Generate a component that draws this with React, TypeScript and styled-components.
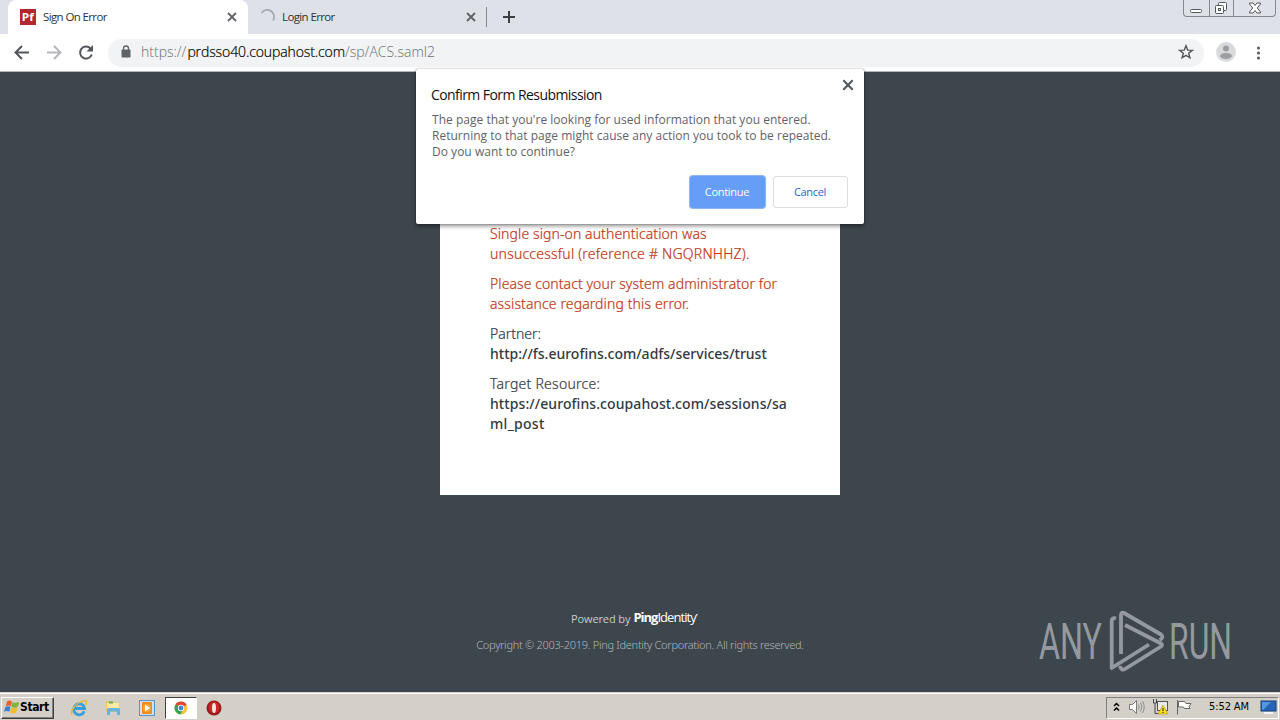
import React from 'react';
import styled, { createGlobalStyle } from 'styled-components';

const GlobalStyle = createGlobalStyle`
  * {
    box-sizing: border-box;
  }

  body {
    margin: 0;
    overflow: hidden;
    font-family: 'Open Sans', 'Noto Sans', sans-serif;
  }

  svg {
    display: block;
    flex: none;
  }
`;

const Screen = styled.div`
  position: relative;
  display: flex;
  flex-direction: column;
  width: 1280px;
  height: 720px;
  background-color: #3e464d;
`;

const TabStrip = styled.div`
  display: flex;
  height: 34px;
  padding-left: 8px;
  background-color: #dee1e8;
`;

const Tab = styled.div<{ $active?: boolean }>`
  display: flex;
  align-items: center;
  width: ${(p) => (p.$active ? 240 : 238)}px;
  height: 34px;
  padding: 0 ${(p) => (p.$active ? 10 : 9)}px 0 12px;
  border-radius: 8px 8px 0 0;
  background-color: ${(p) => (p.$active ? '#fff' : 'transparent')};
`;

const TabTitle = styled.span`
  flex: 1;
  margin-left: 7px;
  color: #303336;
  font-size: 11.5px;
  line-height: 16px;
  letter-spacing: -0.62px;
  white-space: nowrap;
`;

const Divider = styled.div`
  width: 1px;
  height: 20px;
  margin: 7px 15px 0 0;
  background-color: #85888d;
`;

const NewTab = styled.div`
  display: flex;
  align-items: center;
  flex: 1;
`;

const WindowButtons = styled.div`
  display: flex;
  width: 93px;
  height: 17px;
  margin-right: 4px;
  border: 1px solid #85888f;
  border-top: none;
  border-radius: 0 0 4px 4px;
`;

const WindowButton = styled.div<{ $width: number }>`
  display: flex;
  align-items: center;
  justify-content: center;
  width: ${(p) => p.$width}px;

  & + & {
    border-left: 1px solid #85888f;
  }
`;

const Toolbar = styled.div`
  display: flex;
  align-items: center;
  height: 38px;
  padding: 0 13px;
  border-bottom: 1px solid #b4b7ba;
  background-color: #fff;
`;

const NavButton = styled.div`
  display: flex;
  width: 32px;
`;

const AddressBar = styled.div`
  display: flex;
  align-items: center;
  width: 1096px;
  height: 28px;
  margin: 0 12px 0 -1px;
  padding: 0 10px 0 13px;
  border-radius: 14px;
  background-color: #f1f3f4;
`;

const Url = styled.span`
  flex: 1;
  margin: -2px 0 0 10px;
  color: #6b6f73;
  font-size: 14px;
  font-weight: 300;
  line-height: 20px;

  b {
    margin-left: 1px;
    color: #000;
    font-weight: 300;
    letter-spacing: -0.1px;
    -webkit-text-stroke: 0.2px #000;
  }
`;

const MenuDots = styled.div`
  margin-left: 13px;
`;

const Page = styled.div`
  display: flex;
  flex-direction: column;
  align-items: center;
  height: 620px;
`;

const Card = styled.div`
  width: 400px;
  height: 423px;
  padding: 152px 50px 0;
  background-color: #fff;
`;

const Message = styled.p<{ $error?: boolean }>`
  margin: 0 0 10px;
  color: ${(p) => (p.$error ? '#c1350f' : '#32393f')};
  font-family: 'Noto Sans', sans-serif;
  font-size: 14px;
  line-height: 20px;
`;

const Line = styled.span<{ $spacing?: number; $strong?: boolean }>`
  display: block;
  font-weight: ${(p) => (p.$strong ? 500 : 300)};
  letter-spacing: ${(p) => p.$spacing ?? 0}px;
  white-space: nowrap;
  -webkit-text-stroke: ${(p) => (p.$strong ? 0 : 0.2)}px;
`;

const PoweredBy = styled.div`
  display: flex;
  align-items: center;
  height: 20px;
  margin: 113px 0 0 -12px;
  color: #c6cace;
  font-size: 11px;
  letter-spacing: -0.1px;
`;

const PingLogo = styled.span`
  margin: -2px 0 0 3px;
  color: #fff;
  font-size: 13px;
  letter-spacing: -0.95px;

  b {
    font-weight: 700;
    letter-spacing: -1px;
  }

  sup {
    font-size: 6px;
    line-height: 0;
  }
`;

const Copyright = styled.div`
  margin-top: 9px;
  color: #b0b5ba;
  font-family: 'Noto Sans', sans-serif;
  font-size: 11px;
  font-weight: 300;
  line-height: 16px;
  letter-spacing: -0.28px;
`;

const Watermark = styled.div`
  position: absolute;
  left: 1036px;
  top: 606px;
`;

const Dialog = styled.div`
  position: absolute;
  left: 416px;
  top: 69px;
  width: 448px;
  height: 155px;
  padding: 16px;
  border-radius: 2px;
  background-color: #fff;
  box-shadow: 0 0 1px rgba(0, 0, 0, 0.7), 0 2px 4px rgba(0, 0, 0, 0.45);
`;

const DialogClose = styled.div`
  position: absolute;
  right: 9px;
  top: 9px;
`;

const DialogTitle = styled.div`
  margin-left: -1px;
  color: #111;
  font-size: 14px;
  line-height: 20px;
  letter-spacing: -0.57px;
`;

const DialogText = styled.p`
  margin: 7px 0 0;
  color: #5f6368;
  font-size: 12px;
  line-height: 16px;
  letter-spacing: 0.02px;
  white-space: nowrap;
`;

const DialogActions = styled.div`
  display: flex;
  justify-content: flex-end;
  gap: 8px;
  margin-top: 16px;
`;

const Button = styled.div<{ $primary?: boolean }>`
  display: flex;
  align-items: center;
  justify-content: center;
  width: 75px;
  height: 32px;
  padding: 0 1px 2px 0;
  border: 1px solid ${(p) => (p.$primary ? '#669df6' : '#dadce0')};
  border-radius: 3px;
  background-color: ${(p) => (p.$primary ? '#669df6' : '#fff')};
  box-shadow: ${(p) => (p.$primary ? '0 0 0 1px #8fb7f8' : 'none')};
  color: ${(p) => (p.$primary ? '#fff' : '#2568c8')};
  font-size: 11px;
  letter-spacing: -0.3px;
`;

const Taskbar = styled.div`
  display: flex;
  align-items: center;
  height: 28px;
  padding: 2px 1px 0 1px;
  border-top: 1px solid #d4d0c8;
  background-color: #d4d0c8;
  box-shadow: inset 0 1px 0 #fff;
  font-family: 'DejaVu Sans Condensed', 'DejaVu Sans', sans-serif;
`;

const StartButton = styled.div`
  display: flex;
  align-items: center;
  width: 53px;
  height: 22px;
  margin-right: 8px;
  padding: 0 0 1px 2px;
  border: 1px solid;
  border-color: #fff #404040 #404040 #fff;
  box-shadow: inset -1px -1px 0 #808080;
  color: #000;
  font-size: 12px;
  font-weight: bold;
  letter-spacing: -0.4px;
`;

const TaskItem = styled.div<{ $active?: boolean }>`
  display: flex;
  align-items: center;
  justify-content: center;
  width: ${(p) => (p.$active ? 32 : 34)}px;
  height: 22px;
  margin-left: ${(p) => (p.$active ? 1 : 0)}px;
  border: 1px solid;
  border-color: ${(p) => (p.$active ? '#404040 #fff #fff #404040' : 'transparent')};
  background-color: ${(p) => (p.$active ? '#fff' : 'transparent')};
`;

const Tray = styled.div`
  display: flex;
  align-items: center;
  width: 173px;
  height: 22px;
  margin-left: auto;
  padding: 0 1px 2px 6px;
  border: 1px solid;
  border-color: #808080 #fff #fff #808080;
`;

const TrayIcon = styled.div<{ $width: number }>`
  width: ${(p) => p.$width}px;
`;

const Clock = styled.span`
  flex: 1;
  padding-left: 3px;
  color: #000;
  font-size: 11px;
  letter-spacing: -0.1px;
  white-space: nowrap;
`;

function CloseIcon({ size, color = '#5f6368' }: { size: number; color?: string }) {
  return (
    <svg width={size} height={size} viewBox="0 0 12 12">
      <path d="M2 2l8 8M10 2l-8 8" stroke={color} strokeWidth="1.800" />
    </svg>
  );
}

function PingFavicon() {
  return (
    <svg width="16" height="16" viewBox="0 0 16 16">
      <rect width="16" height="16" fill="#b3282d" />
      <text
        x="1.800"
        y="12"
        fill="#fff"
        fontFamily="Open Sans"
        fontSize="11"
        fontWeight="700"
        textLength="12"
        lengthAdjust="spacingAndGlyphs"
      >
        Pf
      </text>
    </svg>
  );
}

function WindowsFlag() {
  return (
    <svg width="16" height="16" viewBox="0 0 16 16">
      <path d="M3 2.500c2-1.400 3.500-1 5 0L6.800 7.300C5.200 6.300 3.700 6.300 1.700 7.300z" fill="#e8622c" />
      <path d="M8.600 2.900c2 1.200 3.800 1 6.600 0L13.800 8c-2 1-4 1-6.500 0z" fill="#7fb63a" />
      <path d="M1.400 8c2-1.100 3.500-1 5.100 0L5.300 12.700C3.800 11.700 2.200 11.700 0 12.700z" fill="#3b7fd0" />
      <path d="M7.200 8.600c2 1.100 3.900 1 6.300 0L12 13.800c-2 1-3.800.9-6.200-.2z" fill="#f3bd2d" />
    </svg>
  );
}

function ExplorerIcon() {
  return (
    <svg width="18" height="18" viewBox="0 0 18 18">
      <path
        d="M14.300 12.200A5.500 5.500 0 1 1 14.600 9.500H5"
        fill="none"
        stroke="#3a9edb"
        strokeWidth="2.800"
      />
      <path d="M2.500 16C-1 14 4 6.500 9.500 3.500S18 1.500 15.500 6" fill="none" stroke="#e5b93c" strokeWidth="1.400" />
    </svg>
  );
}

function FolderIcon() {
  return (
    <svg width="18" height="18" viewBox="0 0 18 18">
      <path d="M2 2h5l1 1.500h7.500V13H2z" fill="#e3c768" />
      <path d="M3 4h12v7H3z" fill="#f8eaa5" />
      <path d="M5 2.500h4v2H5z" fill="#62ad55" />
      <path d="M3 16V10.500q0-1.500 1.500-1.500h10Q16 9 16 10.500V16h-3v-3.500H6V16z" fill="#64b4e1" />
    </svg>
  );
}

function PlayerIcon() {
  return (
    <svg width="18" height="18" viewBox="0 0 18 18">
      <rect x="1.500" y="1.500" width="15" height="15" fill="#c9e2f5" stroke="#5795c8" />
      <rect x="4" y="3" width="10" height="12" rx="1" fill="#ef8a1d" />
      <circle cx="9" cy="9" r="4" fill="#f7a43c" />
      <path d="M7 5.500v7L12 9z" fill="#fff" />
    </svg>
  );
}

function ChromeIcon() {
  return (
    <svg width="14" height="14" viewBox="0 0 14 14">
      <circle cx="7" cy="7" r="6.500" fill="#f5c431" />
      <path d="M7 7L1.400 3.700A6.500 6.500 0 0 1 12.700 3.800z" fill="#de4636" />
      <path d="M7 7L1.400 3.700A6.500 6.500 0 0 0 6.200 13.450L9.500 8.500z" fill="#35a155" />
      <circle cx="7" cy="7" r="3.200" fill="#fff" />
      <circle cx="7" cy="7" r="2.400" fill="#4285e0" />
    </svg>
  );
}

function OperaIcon() {
  return (
    <svg width="16" height="16" viewBox="0 0 16 16">
      <circle cx="8" cy="8" r="7.500" fill="#961a1c" />
      <ellipse cx="8" cy="7.500" rx="5.500" ry="6" fill="#cc2427" />
      <ellipse cx="8" cy="8" rx="2" ry="5" fill="#f3e3e0" />
    </svg>
  );
}

function AnyRunLogo() {
  return (
    <svg width="210" height="72" viewBox="0 0 210 72">
      <g fill="#9499a0" fontFamily="Roboto, sans-serif" fontSize="31">
        <text transform="translate(3 53) scale(1 1.640)" textLength="63" lengthAdjust="spacingAndGlyphs">
          ANY
        </text>
        <text transform="translate(133 53) scale(1 1.640)" textLength="63" lengthAdjust="spacingAndGlyphs">
          RUN
        </text>
      </g>
      <g fill="none" stroke="#9499a0" strokeWidth="3.800" strokeLinejoin="round">
        <path d="M80 12.500q-4.300-1.500-4.300 3V62L113 38.500" />
        <path d="M85 48V9q0-3.500 3-2l37 21.500q3.500 3-1.500 5.500" />
        <path d="M89 19l36 18.500q2 1.500 0 3L89 63q-4 2-5-3" />
      </g>
    </svg>
  );
}

export default function App() {
  return (
    <Screen>
      <GlobalStyle />
      <TabStrip>
        <Tab $active>
          <PingFavicon />
          <TabTitle>Sign On Error</TabTitle>
          <CloseIcon size={12} />
        </Tab>
        <Tab>
          <svg width="15" height="16" viewBox="0 0 15 16">
            <path d="M1.500 4A6 6 0 0 1 13 11.500" fill="none" stroke="#a3a7ae" strokeWidth="1.700" />
          </svg>
          <TabTitle>Login Error</TabTitle>
          <CloseIcon size={12} />
        </Tab>
        <Divider />
        <NewTab>
          <svg width="14" height="14" viewBox="0 0 14 14">
            <path d="M7 1v12M1 7h12" stroke="#3c4043" strokeWidth="2" />
          </svg>
        </NewTab>
        <WindowButtons>
          <WindowButton $width={25}>
            <svg width="13" height="14" viewBox="0 0 13 14">
              <rect x="0.500" y="8.500" width="11" height="3" rx="1" fill="#fff" stroke="#53565b" />
            </svg>
          </WindowButton>
          <WindowButton $width={25}>
            <svg width="14" height="14" viewBox="0 0 14 14">
              <g fill="#fff" stroke="#53565b">
                <rect x="3.500" y="1.500" width="8" height="8" rx="1" />
                <rect x="0.500" y="4.500" width="8" height="8" rx="1" />
                <rect x="3.500" y="7.500" width="2" height="2" />
              </g>
            </svg>
          </WindowButton>
          <WindowButton $width={42}>
            <svg width="14" height="12" viewBox="0 0 14 12">
              <path
                d="M1.500 1h3.500l2 2.500L9 1h3.500v1L9.300 6l3.200 4v1H9L7 8.500 5 11H1.500v-1L4.700 6 1.500 2z"
                fill="#fff"
                stroke="#53565b"
              />
            </svg>
          </WindowButton>
        </WindowButtons>
      </TabStrip>

      <Toolbar>
        <NavButton>
          <svg width="18" height="18" viewBox="0 0 18 18">
            <path d="M16 8.500H3M9 2L2.500 8.500 9 15" fill="none" stroke="#53575b" strokeWidth="2" />
          </svg>
        </NavButton>
        <NavButton>
          <svg width="18" height="18" viewBox="0 0 18 18">
            <path d="M2 8.500h13M9 2l6.500 6.500L9 15" fill="none" stroke="#b5b7ba" strokeWidth="2" />
          </svg>
        </NavButton>
        <NavButton>
          <svg width="18" height="18" viewBox="0 0 18 18">
            <path d="M14.800 10.500A6 6 0 1 1 13.500 4.500" fill="none" stroke="#53575b" strokeWidth="2" />
            <path d="M16 1v6.500H9.500z" fill="#53575b" />
          </svg>
        </NavButton>
        <AddressBar>
          <svg width="10" height="15" viewBox="0 0 10 15">
            <rect x="0.500" y="4.500" width="9" height="8" rx="1" fill="#5f6368" />
            <path d="M2.500 5V3.500a2.500 2.500 0 0 1 5 0V5" fill="none" stroke="#5f6368" strokeWidth="1.300" />
          </svg>
          <Url>
            https://<b>prdsso40.coupahost.com</b>/sp/ACS.saml2
          </Url>
          <svg width="16" height="18" viewBox="0 0 16 18">
            <path
              d="M8 1.800l1.700 4.300 4.600.3-3.600 2.900 1.200 4.500L8 11.300l-3.900 2.500 1.200-4.500L1.700 6.400l4.600-.3z"
              fill="none"
              stroke="#53575b"
              strokeWidth="1.400"
            />
          </svg>
        </AddressBar>
        <svg width="20" height="22" viewBox="0 0 20 22">
          <circle cx="10" cy="10" r="10" fill="#d8dadc" />
          <circle cx="10" cy="6.500" r="3" fill="#9b9da0" />
          <path d="M4 14.500q0-3.500 6-3.500t6 3.500q-2 2.500-6 2.500t-6-2.500z" fill="#9b9da0" />
        </svg>
        <MenuDots>
          <svg width="18" height="18" viewBox="0 0 18 18" fill="#53575b">
            <circle cx="9.500" cy="4" r="1.500" />
            <circle cx="9.500" cy="9" r="1.500" />
            <circle cx="9.500" cy="14" r="1.500" />
          </svg>
        </MenuDots>
      </Toolbar>

      <Page>
        <Card>
          <Message $error>
            <Line $spacing={0.1}>Single sign-on authentication was</Line>
            <Line $spacing={0.22}>unsuccessful (reference # NGQRNHHZ).</Line>
          </Message>
          <Message $error>
            <Line $spacing={0.08}>Please contact your system administrator for</Line>
            <Line $spacing={0.12}>assistance regarding this error.</Line>
          </Message>
          <Message>
            <Line>Partner:</Line>
            <Line $strong>http://fs.eurofins.com/adfs/services/trust</Line>
          </Message>
          <Message>
            <Line $spacing={0.25}>Target Resource:</Line>
            <Line $strong $spacing={0.08}>
              https://eurofins.coupahost.com/sessions/sa
            </Line>
            <Line $strong $spacing={0.3}>
              ml_post
            </Line>
          </Message>
        </Card>
        <PoweredBy>
          Powered by
          <PingLogo>
            <b>Ping</b>Identity<sup>•</sup>
          </PingLogo>
        </PoweredBy>
        <Copyright>Copyright © 2003-2019. Ping Identity Corporation. All rights reserved.</Copyright>
      </Page>

      <Taskbar>
        <StartButton>
          <WindowsFlag />
          Start
        </StartButton>
        <TaskItem>
          <ExplorerIcon />
        </TaskItem>
        <TaskItem>
          <FolderIcon />
        </TaskItem>
        <TaskItem>
          <PlayerIcon />
        </TaskItem>
        <TaskItem $active>
          <ChromeIcon />
        </TaskItem>
        <TaskItem>
          <OperaIcon />
        </TaskItem>
        <Tray>
          <TrayIcon $width={15}>
            <svg width="7" height="10" viewBox="0 0 7 10">
              <path d="M1 4l2.500-2.500L6 4M1 8.500L3.500 6 6 8.500" fill="none" stroke="#000" strokeWidth="1.500" />
            </svg>
          </TrayIcon>
          <TrayIcon $width={24}>
            <svg width="17" height="16" viewBox="0 0 17 16">
              <path d="M1.500 5.500h3l4-4v13l-4-4h-3z" fill="#fff" stroke="#77797b" />
              <path d="M10.500 5.500q1.500 2.500 0 5M12.500 3.500q3 4.500 0 9M14.500 2q3.500 6 0 12" fill="none" stroke="#8e8e8e" />
            </svg>
          </TrayIcon>
          <TrayIcon $width={24}>
            <svg width="17" height="17" viewBox="0 0 17 17">
              <rect x="5.500" y="3.500" width="10" height="9" fill="#e9e9e9" stroke="#555" />
              <path d="M1.500 1v4h3V1M3 5v10.500h4" fill="none" stroke="#444" />
              <path d="M11 7l5 9H6z" fill="#f8d91d" stroke="#b49a12" strokeWidth="0.600" />
              <path d="M11 10v3M11 14v1" stroke="#222" />
            </svg>
          </TrayIcon>
          <TrayIcon $width={30}>
            <svg width="17" height="16" viewBox="0 0 17 16">
              <path d="M1.500 1v14.500" stroke="#666" />
              <path d="M2.500 2.500h6l1.500 2h5l-2 3 1 2H8.500l-1-1.500h-5z" fill="#fff" stroke="#666" />
            </svg>
          </TrayIcon>
          <Clock>5:52 AM</Clock>
          <svg width="17" height="16" viewBox="0 0 17 16">
            <rect x="1" y="2" width="15" height="10" fill="#2565b5" stroke="#173f7e" />
            <path d="M2 3h9L3 11H2z" fill="#5697dc" />
            <path d="M4 14h9" stroke="#f3f3f3" strokeWidth="2" />
          </svg>
        </Tray>
      </Taskbar>

      <Dialog>
        <DialogTitle>Confirm Form Resubmission</DialogTitle>
        <DialogText>
          The page that you're looking for used information that you entered.
          <br />
          Returning to that page might cause any action you took to be repeated.
          <br />
          Do you want to continue?
        </DialogText>
        <DialogActions>
          <Button $primary>Continue</Button>
          <Button>Cancel</Button>
        </DialogActions>
        <DialogClose>
          <CloseIcon size={14} color="#53575b" />
        </DialogClose>
      </Dialog>
      <Watermark>
        <AnyRunLogo />
      </Watermark>
    </Screen>
  );
}
